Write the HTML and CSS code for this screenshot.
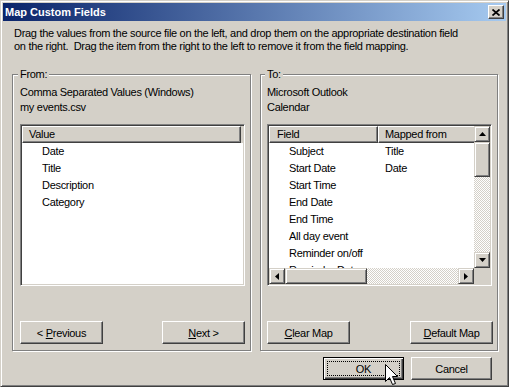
FILE: index.html
```html
<!DOCTYPE html>
<html>
<head>
<meta charset="utf-8">
<title>Map Custom Fields</title>
<link rel="stylesheet" href="styles.css">
</head>
<body>
<div class="window">
  <div class="titlebar">
    <span class="title">Map Custom Fields</span>
    <div class="close">
      <svg width="8" height="7" viewBox="0 0 8 7"><path d="M0.5 0.5 L7.5 6.5 M7.5 0.5 L0.5 6.5" stroke="#000" stroke-width="1.7" fill="none"/></svg>
    </div>
  </div>
  <div class="client">
    <div class="intro">
      <span class="line">Drag the values from the source file on the left, and drop them on the appropriate destination field</span>
      <span class="line">on the right.&nbsp; Drag the item from the right to the left to remove it from the field mapping.</span>
    </div>
    <div class="groups">
      <div class="group group-from">
        <span class="legend">From:</span>
        <div class="source">Comma Separated Values (Windows)<br>my events.csv</div>
        <div class="listview lv-from">
          <div class="lv-header">
            <div class="hcol hcol-value">Value</div>
            <div class="hcol hcol-fill"></div>
          </div>
          <div class="row">Date</div>
          <div class="row">Title</div>
          <div class="row">Description</div>
          <div class="row">Category</div>
        </div>
        <div class="btnrow">
          <button class="btn">&lt; <u>P</u>revious</button>
          <button class="btn"><u>N</u>ext &gt;</button>
        </div>
      </div>
      <div class="group group-to">
        <span class="legend">To:</span>
        <div class="source">Microsoft Outlook<br>Calendar</div>
        <div class="listview lv-to">
          <div class="lv-body">
            <div class="lv-header">
              <div class="hcol hcol-field">Field</div>
              <div class="hcol hcol-mapped">Mapped from</div>
            </div>
            <div class="row2"><span class="c1">Subject</span><span class="c2">Title</span></div>
            <div class="row2"><span class="c1">Start Date</span><span class="c2">Date</span></div>
            <div class="row2"><span class="c1">Start Time</span><span class="c2"></span></div>
            <div class="row2"><span class="c1">End Date</span><span class="c2"></span></div>
            <div class="row2"><span class="c1">End Time</span><span class="c2"></span></div>
            <div class="row2"><span class="c1">All day event</span><span class="c2"></span></div>
            <div class="row2"><span class="c1">Reminder on/off</span><span class="c2"></span></div>
            <div class="row2"><span class="c1">Reminder Date</span><span class="c2"></span></div>
          </div>
          <div class="vscroll">
            <div class="sbtn"><svg width="7" height="4" viewBox="0 0 7 4"><polygon points="3.5,0 7,4 0,4" fill="#000"/></svg></div>
            <div class="thumb vthumb"></div>
            <div class="track"></div>
            <div class="sbtn"><svg width="7" height="4" viewBox="0 0 7 4"><polygon points="0,0 7,0 3.5,4" fill="#000"/></svg></div>
          </div>
          <div class="hscroll">
            <div class="sbtn"><svg width="4" height="7" viewBox="0 0 4 7"><polygon points="4,0 4,7 0,3.5" fill="#000"/></svg></div>
            <div class="thumb hthumb"></div>
            <div class="track"></div>
            <div class="sbtn"><svg width="4" height="7" viewBox="0 0 4 7"><polygon points="0,0 4,3.5 0,7" fill="#000"/></svg></div>
          </div>
          <div class="corner"></div>
        </div>
        <div class="btnrow">
          <button class="btn"><u>C</u>lear Map</button>
          <button class="btn"><u>D</u>efault Map</button>
        </div>
      </div>
    </div>
    <div class="footer">
      <button class="btn btn-ok">OK</button>
      <button class="btn btn-cancel">Cancel</button>
    </div>
  </div>
  <svg class="cursor" width="14" height="22" viewBox="0 0 14 22">
    <path d="M0.5 0.5 V17.5 L4.5 13.5 L7.5 20.5 L10.5 19.5 L7.5 12.5 H12.5 Z" fill="#fff" stroke="#000" stroke-width="1"/>
  </svg>
</div>
</body>
</html>
```

FILE: styles.css
```css
body {
  margin: 0;
  background: #d4d0c8;
  font-family: "Liberation Sans", Arial, sans-serif;
  font-size: 11px;
  color: #000;
}

.window {
  position: relative;
  width: 509px;
  height: 387px;
  box-sizing: border-box;
  border: 1px solid;
  border-color: #d4d0c8 #404040 #404040 #d4d0c8;
  box-shadow: inset 1px 1px #fff, inset -1px -1px #808080;
  padding: 2px;
  background: #d4d0c8;
  overflow: hidden;
}

.titlebar {
  height: 18px;
  display: flex;
  align-items: center;
  justify-content: space-between;
  background: linear-gradient(to right, #0a246a, #a6caf0);
  padding-left: 2px;
}

.title {
  color: #fff;
  font-weight: bold;
  font-size: 11px;
  line-height: 18px;
}

.close {
  width: 16px;
  height: 14px;
  box-sizing: border-box;
  margin-right: 2px;
  background: #d4d0c8;
  border: 1px solid;
  border-color: #fff #404040 #404040 #fff;
  box-shadow: inset -1px -1px #808080;
  display: flex;
  align-items: center;
  justify-content: center;
}

.close svg { display: block; }

.intro {
  margin: 6px 0 0 11px;
  line-height: 13px;
  letter-spacing: -0.3px;
}

.line {
  display: block;
  white-space: nowrap;
}

.groups {
  display: flex;
  gap: 9px;
  margin-top: 21px;
  margin-left: 9px;
}

.group {
  position: relative;
  box-sizing: border-box;
  height: 277px;
  border: 1px solid #808080;
  box-shadow: 1px 1px 0 #fff, inset 1px 1px 0 #fff;
  display: flex;
  flex-direction: column;
  padding-top: 10px;
  padding-bottom: 6px;
}

.group-from {
  width: 239px;
  padding-left: 7px;
  padding-right: 5px;
}

.group-to {
  width: 238px;
  padding-left: 6px;
  padding-right: 4px;
}

.legend {
  position: absolute;
  top: -7px;
  left: 5px;
  padding: 0 2px;
  background: #d4d0c8;
  line-height: 13px;
  letter-spacing: -0.3px;
}

.group-to .legend { left: 4px; }

.source {
  line-height: 15px;
  letter-spacing: -0.3px;
  white-space: nowrap;
}

.listview {
  margin-top: 9px;
  width: 225px;
  height: 162px;
  box-sizing: border-box;
  border: 1px solid;
  border-color: #808080 #fff #fff #808080;
  box-shadow: inset 1px 1px #404040, inset -1px -1px #d4d0c8;
  padding: 1px;
  background: #fff;
  overflow: hidden;
  flex: none;
}

.lv-header {
  display: flex;
  height: 17px;
  background: #d4d0c8;
  flex: none;
}

.hcol {
  box-sizing: border-box;
  height: 17px;
  padding-left: 6px;
  line-height: 15px;
  border: 1px solid;
  border-color: #fff #404040 #404040 #fff;
  box-shadow: inset -1px -1px #808080;
  white-space: nowrap;
  overflow: hidden;
  letter-spacing: -0.3px;
  flex: none;
}

.hcol-value { width: 219px; }
.hcol-fill { flex: 1; border: none; box-shadow: none; }
.hcol-field { width: 109px; padding-left: 7px; }
.hcol-mapped { width: 110px; padding-left: 6px; }

.row {
  height: 17px;
  line-height: 17px;
  padding-left: 20px;
  white-space: nowrap;
  letter-spacing: -0.3px;
}

.lv-to {
  display: grid;
  grid-template-columns: 205px 16px;
  grid-template-rows: 142px 16px;
}

.lv-body {
  overflow: hidden;
  background: #fff;
}

.row2 {
  display: flex;
  height: 17px;
  line-height: 17px;
  white-space: nowrap;
  letter-spacing: -0.3px;
}

.c1 { width: 89px; padding-left: 20px; flex: none; }
.c2 { padding-left: 7px; }

.vscroll {
  display: flex;
  flex-direction: column;
}

.hscroll {
  display: flex;
}

.track {
  flex: 1;
  background: repeating-conic-gradient(#d4d0c8 0 25%, #fff 0 50%) 0 0 / 2px 2px;
}

.sbtn, .thumb {
  box-sizing: border-box;
  background: #d4d0c8;
  border: 1px solid;
  border-color: #d4d0c8 #404040 #404040 #d4d0c8;
  box-shadow: inset 1px 1px #fff, inset -1px -1px #808080;
  flex: none;
}

.sbtn {
  width: 16px;
  height: 16px;
  display: flex;
  align-items: center;
  justify-content: center;
}

.sbtn svg { display: block; }

.vthumb { width: 16px; height: 35px; }
.hthumb { height: 16px; width: 82px; }

.corner { background: #d4d0c8; }

.btnrow {
  margin-top: auto;
  display: flex;
  justify-content: space-between;
}

.btn {
  width: 83px;
  height: 23px;
  box-sizing: border-box;
  font: inherit;
  letter-spacing: -0.3px;
  color: #000;
  background: #d4d0c8;
  border: 1px solid;
  border-color: #fff #404040 #404040 #fff;
  box-shadow: inset -1px -1px #808080;
  padding: 0;
  margin: 0;
}

.footer {
  display: flex;
  justify-content: flex-end;
  gap: 7px;
  margin-top: 6px;
  padding-right: 14px;
}

.btn-ok, .btn-cancel { width: 81px; }

.btn-ok {
  position: relative;
  border: 1px solid #000;
  box-shadow: inset 1px 1px #fff, inset -1px -1px #404040, inset -2px -2px #808080;
}

.btn-ok::after {
  content: "";
  position: absolute;
  inset: 3px;
  border: 1px dotted #000;
}

.cursor {
  position: absolute;
  left: 384px;
  top: 363px;
}
```
